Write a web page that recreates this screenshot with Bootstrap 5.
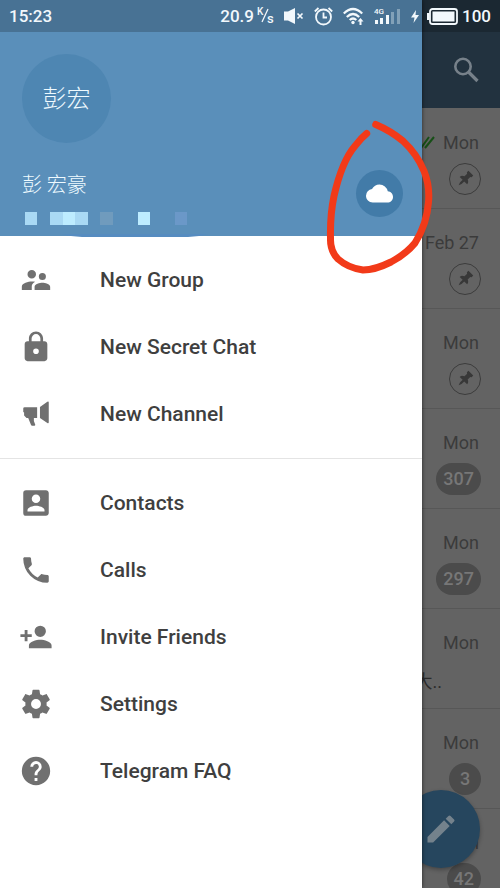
<!DOCTYPE html>
<html lang="en">
<head>
<meta charset="utf-8">
<meta name="viewport" content="width=device-width, initial-scale=1">
<title>Telegram</title>
<link href="https://cdn.jsdelivr.net/npm/bootstrap@5.3.0/dist/css/bootstrap.min.css" rel="stylesheet">
<style>
body { font-family: Roboto, "Noto Sans CJK SC", sans-serif; }
svg { display: block; flex-shrink: 0; fill: currentColor; }
.app { height: 100vh; background: #636363; }

.statusbar { background: rgba(0, 0, 0, .2); height: 32px; padding: 0 9px; font-size: 17px; line-height: 32px; z-index: 3; color: #f2f8fc; font-weight: 500; }
.statusbar .rate { gap: 3px; margin-right: 10px; }
.statusbar .sys { gap: 10px; }
.statusbar .power { gap: 4px; }

.toolbar { height: 108px; background: #22323f; padding: 32px 20px 0 0; color: #77818a; }
.chats { padding-top: 1px; }
.chat { height: 100px; border-bottom: 1px solid #575757; padding: 21px 19px 0 0; font-size: 18px; line-height: 26px; color: #3b3b3b; }
.chat .stamp { gap: 8px; margin-right: 2px; }
.chat .count { margin-top: 7px; min-width: 32px; height: 32px; border-radius: 16px; padding: 0 7px; line-height: 32px; background: #4b4b4b; color: #777; text-align: center; font-weight: 500; }
.chat .pinned { margin-top: 7px; width: 32px; height: 32px; border: 1px solid #3c3c3c; color: #383838; }
.chat .preview { margin: 13px 39px 0 0; color: #2c2c2c; }
.fab { width: 78px; height: 78px; right: 20px; bottom: 20px; background: #26465e; color: #74828c; box-shadow: 0 2px 4px rgba(0, 0, 0, .3); z-index: 1; }

.drawer { width: 84.4%; z-index: 2; box-shadow: 0 0 4px rgba(0, 0, 0, .6); }
.profile { background: #5a8fba; height: 236px; padding: 54px 19px 0 22px; color: #eefaff; }
.avatar { width: 89px; height: 89px; background: #4e86b2; font-size: 24px; font-weight: 300; }
.person { font-size: 20px; line-height: 28px; margin-bottom: 13px; font-weight: 300; }
.cloud { width: 47px; height: 47px; background: #427ba8; color: #fff; margin-top: 27px; }
.menu { padding: 10px 0 11px; }
.menu + .menu { border-top: 1px solid #e4e4e4; }
.entry { height: 67px; padding: 0 19px; gap: 47px; font-size: 21px; line-height: 28px; font-weight: 500; color: #3f3f3f; }
.entry:hover { background: #f4f4f4; color: #3f3f3f; }
.entry svg { color: #707070; }
.marking { z-index: 4; right: 66px; top: 116px; pointer-events: none; fill: none; }
</style>
<script src="https://cdn.jsdelivr.net/npm/bootstrap@5.3.0/dist/js/bootstrap.bundle.min.js"></script>
</head>
<body>
<svg class="d-none" aria-hidden="true">
  <symbol id="pin" viewBox="0 0 24 24"><path transform="rotate(45 12 12)" d="M7.500 1h9v3l-1.500 1v5c2.500 1 4 2.500 4 5h-5.500v5L12 24l-1.500-4v-5H5c0-2.500 1.500-4 4-5V5L7.500 4z"/></symbol>
</svg>
<div class="app position-relative overflow-hidden">

  <header class="statusbar position-absolute top-0 start-0 w-100 d-flex justify-content-between align-items-center">
    <span>15:23</span>
    <div class="d-flex align-items-center">
      <div class="rate d-flex align-items-center"><span>20.9</span>
        <svg width="17" height="18" viewBox="0 0 17 18" role="img" aria-label="K/s"><text x="0" y="8" font-size="10">K</text><path d="M5 15L11 2" stroke="currentColor" stroke-width="1.300"/><text x="10" y="16" font-size="13">s</text></svg>
      </div>
      <div class="sys d-flex align-items-center">
        <svg width="20" height="18" viewBox="0 0 20 18"><path d="M0 4.500h4L11 1v16l-7-3.500H0z"/><path d="M13.500 6.500l5 5m0-5l-5 5" stroke="currentColor" stroke-width="1.700"/></svg>
        <svg width="19" height="19" viewBox="0 0 19 19"><g fill="none" stroke="currentColor" stroke-width="1.800"><circle cx="9.500" cy="10" r="7.500"/><path d="M9.500 5.500V10.500H13M.8 4.500L4.500 1M18.200 4.500L14.500 1"/></g></svg>
        <svg width="21" height="18" viewBox="0 0 21 18"><g fill="none" stroke="currentColor" stroke-width="2.200"><path d="M.8 6.500Q10 -2.500 19.200 6.500M3.800 10Q10 4 16.200 10M6.700 13Q10 10 13.300 13"/></g><circle cx="10" cy="15.500" r="1.700"/><path d="M17.500 11l3 3.500h-2V18h-2v-3.500h-2z"/></svg>
        <svg width="27" height="18" viewBox="0 0 27 18"><text x="0" y="7" font-size="8" font-weight="500">4G</text><path d="M1 13h3v4H1zM6 11h3v6H6zM12 8h3v9h-3z"/><path opacity=".35" d="M17 5h3v12h-3zM23 2h3v15h-3z"/></svg>
        <svg width="8" height="15" viewBox="0 0 8 15"><path d="M5 1L0 8.500h3.500L2.500 14 8 6H4.500z"/></svg>
      </div>
      <div class="power d-flex align-items-center ps-2">
        <svg width="31" height="17" viewBox="0 0 31 17"><path d="M2.500 5H0v7h2.500z"/><rect x="3" y="1" width="27" height="15" rx="2.500" fill="none" stroke="currentColor" stroke-width="1.800"/><rect x="5.500" y="3.500" width="22" height="10"/></svg>
        <span>100</span>
      </div>
    </div>
  </header>

  <div class="toolbar d-flex justify-content-end align-items-center">
    <button class="btn border-0 p-0 text-reset" aria-label="Search"><svg width="28" height="28" viewBox="0 0 28 28"><circle cx="11" cy="10.500" r="7.700" fill="none" stroke="currentColor" stroke-width="2.600"/><path d="M16.500 16L25.500 25" stroke="currentColor" stroke-width="3.200"/></svg></button>
  </div>

  <main class="chats">
    <div class="chat d-flex flex-column align-items-end">
      <div class="stamp d-flex align-items-center"><svg width="18" height="16" viewBox="0 0 18 16" stroke="#174f17" stroke-width="2"><path d="M0 8l4 5L12 2M8 13L17 2" fill="none"/></svg><span>Mon</span></div>
      <span class="pinned rounded-circle d-flex align-items-center justify-content-center"><svg width="18" height="18"><use href="#pin"/></svg></span>
    </div>
    <div class="chat d-flex flex-column align-items-end"><span class="stamp">Feb 27</span>
      <span class="pinned rounded-circle d-flex align-items-center justify-content-center"><svg width="18" height="18"><use href="#pin"/></svg></span></div>
    <div class="chat d-flex flex-column align-items-end"><span class="stamp">Mon</span>
      <span class="pinned rounded-circle d-flex align-items-center justify-content-center"><svg width="18" height="18"><use href="#pin"/></svg></span></div>
    <div class="chat d-flex flex-column align-items-end"><span class="stamp">Mon</span><span class="count">307</span></div>
    <div class="chat d-flex flex-column align-items-end"><span class="stamp">Mon</span><span class="count">297</span></div>
    <div class="chat d-flex flex-column align-items-end"><span class="stamp">Mon</span><span class="preview">大..</span></div>
    <div class="chat d-flex flex-column align-items-end"><span class="stamp">Mon</span><span class="count">3</span></div>
    <div class="chat d-flex flex-column align-items-end"><span class="stamp">Mon</span><span class="count">42</span></div>
  </main>

  <button class="fab btn border-0 rounded-circle position-absolute d-flex align-items-center justify-content-center p-0" aria-label="New message"><svg width="36" height="36" viewBox="0 0 24 24"><path d="M3 17.250V21h3.750L17.810 9.940l-3.750-3.750zM20.710 7.040a1 1 0 0 0 0-1.410l-2.340-2.340a1 1 0 0 0-1.410 0l-1.830 1.830 3.750 3.750z"/></svg></button>

  <aside class="drawer position-absolute top-0 start-0 h-100 bg-white">
    <div class="profile">
      <div class="avatar rounded-circle d-flex align-items-center justify-content-center">彭宏</div>
      <div class="d-flex justify-content-between">
        <div class="pt-4">
          <div class="person mt-1">彭 宏豪</div>
          <svg width="186" height="25" viewBox="0 0 186 25"><path fill="#568cc0" d="M40 22Q50 25 60 25H166Q176 25 186 22z"/><path fill="#a9d9f4" d="M3 0h12v13H3zM28 0h13v13H28zM53 0h13v13H53z"/><path fill="#bdecff" d="M41 0h12v13H41zM116 0h12v13h-12z"/><path fill="#709bbd" d="M78 0h13v13H78z"/><path fill="#6b98c8" d="M153 0h12v13h-12z"/></svg>
        </div>
        <button class="cloud btn border-0 rounded-circle p-0 d-flex align-items-center justify-content-center" aria-label="Saved messages"><svg width="27" height="27" viewBox="0 0 24 24"><path d="M19.350 10.040A7.490 7.490 0 0 0 12 4C9.110 4 6.600 5.640 5.350 8.040A5.994 5.994 0 0 0 0 14c0 3.310 2.690 6 6 6h13c2.760 0 5-2.240 5-5 0-2.640-2.050-4.780-4.650-4.960z"/></svg></button>
      </div>
    </div>
    <nav class="menu" aria-label="Create">
      <a href="#" class="entry d-flex align-items-center text-decoration-none"><svg width="34" height="34" viewBox="0 0 24 24"><path d="M16.500 12a2.500 2.500 0 1 0 0-5 2.500 2.500 0 0 0 0 5zM9 11a3 3 0 1 0 0-6 3 3 0 0 0 0 6zm7.500 3c-1.830 0-5.500.920-5.500 2.750V19h11v-2.250c0-1.830-3.670-2.750-5.500-2.750zM9 13c-2.330 0-7 1.170-7 3.500V19h7v-2.250c0-.850.330-2.340 2.370-3.470C10.500 13.100 9.660 13 9 13z"/></svg>New Group</a>
      <a href="#" class="entry d-flex align-items-center text-decoration-none"><svg width="34" height="34" viewBox="0 0 24 24"><path d="M18 8h-1V6c0-2.760-2.240-5-5-5S7 3.240 7 6v2H6c-1.100 0-2 .9-2 2v10c0 1.100.9 2 2 2h12c1.100 0 2-.9 2-2V10c0-1.100-.9-2-2-2zm-6 9a2 2 0 1 1 0-4 2 2 0 0 1 0 4zm3.100-9H8.900V6a3.100 3.100 0 0 1 6.200 0z"/></svg>New Secret Chat</a>
      <a href="#" class="entry d-flex align-items-center text-decoration-none"><svg width="34" height="34" viewBox="0 0 24 24"><path d="M14.800 7l5.200-3.600q1-.5 1 .5v14q0 1-1 .5l-5.200-3.600zM4 7.200h8.800v7.600h-2.300v2.200l1 2.600q0 .7-.7.7H9.200q-.5 0-.7-.5L6.500 14.800H5.300L3.600 13V11L3 10.500V8.200q0-1 1-1z"/></svg>New Channel</a>
    </nav>
    <nav class="menu" aria-label="Main">
      <a href="#" class="entry d-flex align-items-center text-decoration-none"><svg width="34" height="34" viewBox="0 0 24 24"><path d="M3 5v14a2 2 0 0 0 2 2h14c1.100 0 2-.9 2-2V5c0-1.100-.9-2-2-2H5a2 2 0 0 0-2 2zm12 4a3 3 0 1 1-6 0 3 3 0 0 1 6 0zm-9 8c0-2 4-3.100 6-3.100s6 1.100 6 3.100v1H6z"/></svg>Contacts</a>
      <a href="#" class="entry d-flex align-items-center text-decoration-none"><svg width="34" height="34" viewBox="0 0 24 24"><path d="M6.620 10.790a15.150 15.150 0 0 0 6.590 6.590l2.200-2.200c.270-.270.670-.360 1.020-.240 1.120.370 2.330.570 3.570.570.550 0 1 .450 1 1V20c0 .550-.450 1-1 1A17 17 0 0 1 3 4c0-.550.450-1 1-1h3.500c.550 0 1 .450 1 1 0 1.250.2 2.450.570 3.570.110.350.030.740-.250 1.020z"/></svg>Calls</a>
      <a href="#" class="entry d-flex align-items-center text-decoration-none"><svg width="34" height="34" viewBox="0 0 24 24"><path d="M15 12a4 4 0 1 0 0-8 4 4 0 0 0 0 8zm-9-2V7H4v3H1v2h3v3h2v-3h3v-2zm9 4c-2.670 0-8 1.340-8 4v2h16v-2c0-2.660-5.330-4-8-4z"/></svg>Invite Friends</a>
      <a href="#" class="entry d-flex align-items-center text-decoration-none"><svg width="34" height="34" viewBox="0 0 24 24"><path d="M19.430 12.980c.040-.320.070-.640.070-.980s-.030-.660-.070-.980l2.110-1.650c.190-.150.240-.420.120-.640l-2-3.460c-.120-.220-.390-.3-.610-.220l-2.490 1c-.520-.4-1.080-.730-1.690-.980l-.380-2.650A.488.488 0 0 0 14 2h-4c-.250 0-.460.180-.490.420l-.380 2.650c-.610.250-1.170.590-1.690.980l-2.490-1c-.230-.090-.490 0-.610.220l-2 3.460c-.130.220-.070.490.120.640l2.110 1.650c-.040.320-.070.650-.070.980s.030.660.070.980l-2.110 1.650c-.190.150-.240.420-.120.640l2 3.460c.120.220.390.3.610.220l2.490-1c.520.4 1.080.730 1.690.980l.380 2.650c.030.240.240.420.490.420h4c.250 0 .460-.180.490-.420l.380-2.650c.610-.250 1.170-.590 1.690-.980l2.490 1c.230.090.490 0 .610-.220l2-3.460c.120-.220.070-.490-.120-.640zM12 15.500a3.500 3.500 0 1 1 0-7 3.500 3.500 0 0 1 0 7z"/></svg>Settings</a>
      <a href="#" class="entry d-flex align-items-center text-decoration-none"><svg width="34" height="34" viewBox="0 0 24 24"><path d="M12 2a10 10 0 1 0 0 20 10 10 0 0 0 0-20zm1 17h-2v-2h2zm2.070-7.750l-.9.920C13.450 12.900 13 13.500 13 15h-2v-.5c0-1.100.450-2.100 1.170-2.830l1.240-1.260A2 2 0 1 0 10 9H8a4 4 0 1 1 8 0c0 .880-.360 1.680-.930 2.250z"/></svg>Telegram FAQ</a>
    </nav>
  </aside>

  <svg class="marking position-absolute" width="110" height="162" viewBox="324 116 110 162" aria-hidden="true"><path d="M375.700 124.500Q391 131 403 141Q417 154 424 171Q430 186 428.500 202Q427 224 415 243Q406 254 391 262Q375 270 363 270Q348 268 338 259Q330 251 330.500 238Q330 215 334 196Q342 161 355 146Q361 138 366.700 133.500" fill="none" stroke="#f23a19" stroke-width="7" stroke-linecap="round" stroke-linejoin="round"/></svg>
</div>
</body>
</html>
